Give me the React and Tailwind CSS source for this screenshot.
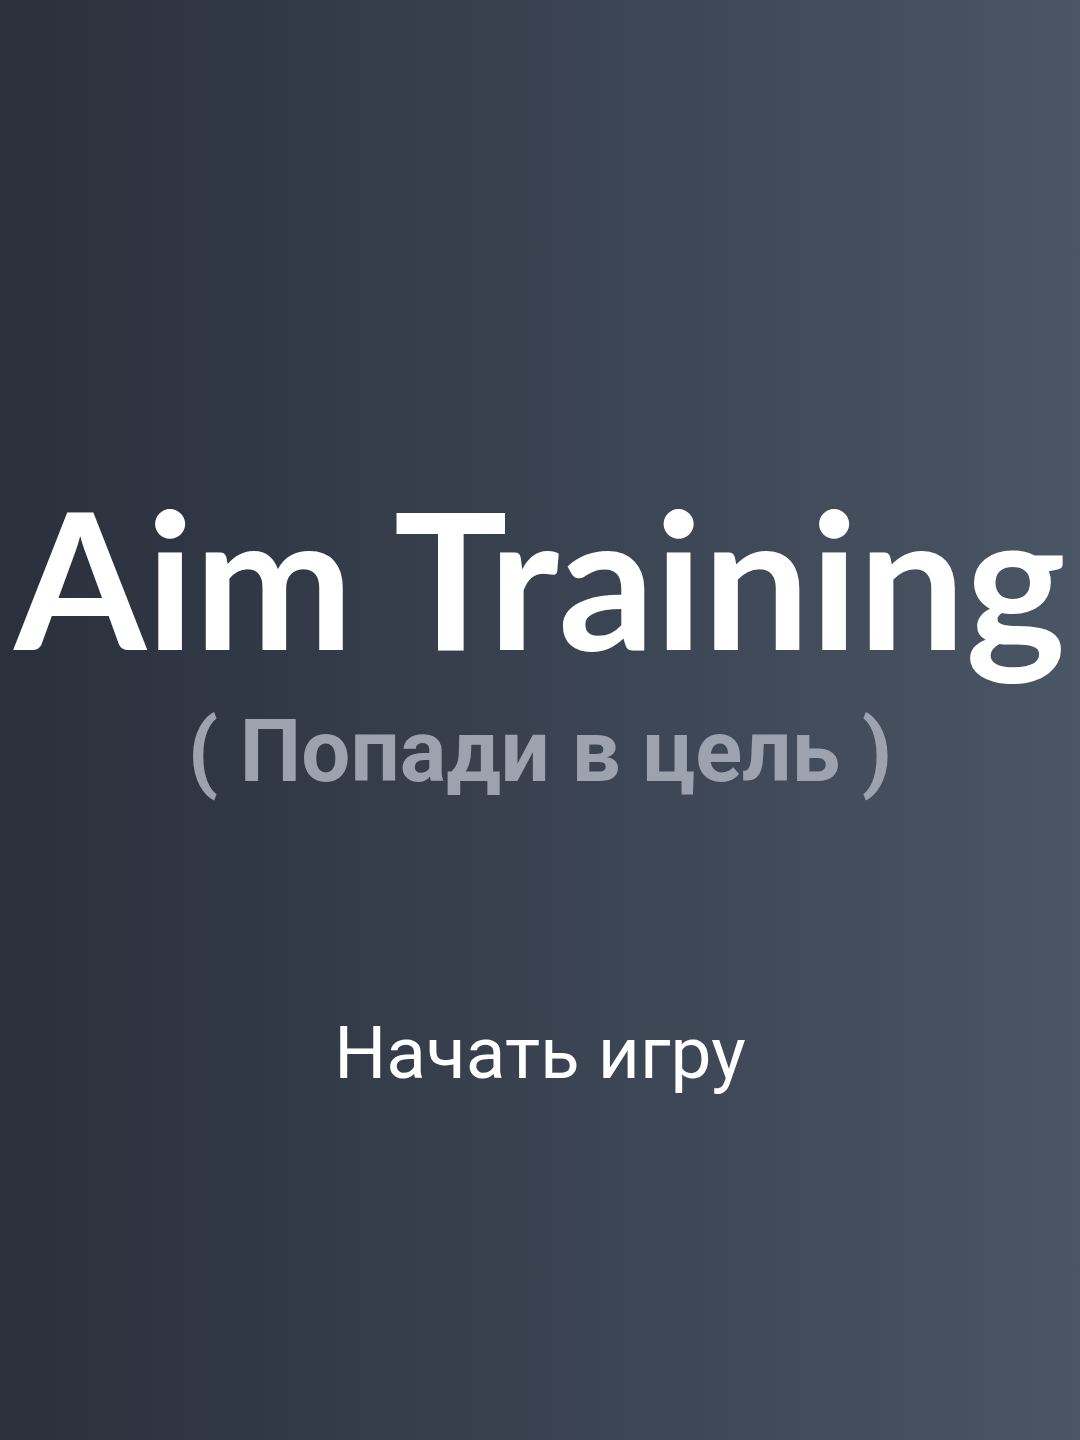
import React from 'react';

export default function App() {
  return (
    <div className="w-full h-[1440px] bg-gradient-to-r from-[#2a303c] to-[#4a5565] flex flex-col items-center overflow-hidden font-['Roboto',sans-serif]">
      <h1 className="mt-[481px] text-white text-[190px] leading-none font-bold whitespace-nowrap font-['Lato',sans-serif]">
        Aim Training
      </h1>
      <h2 className="mt-[37px] text-[#9ca3af] text-[87px] leading-none font-bold whitespace-nowrap">
        ( Попади в цель )
      </h2>
      <button className="mt-[222px] text-white text-[73px] leading-none font-normal whitespace-nowrap">
        Начать игру
      </button>
    </div>
  );
}
